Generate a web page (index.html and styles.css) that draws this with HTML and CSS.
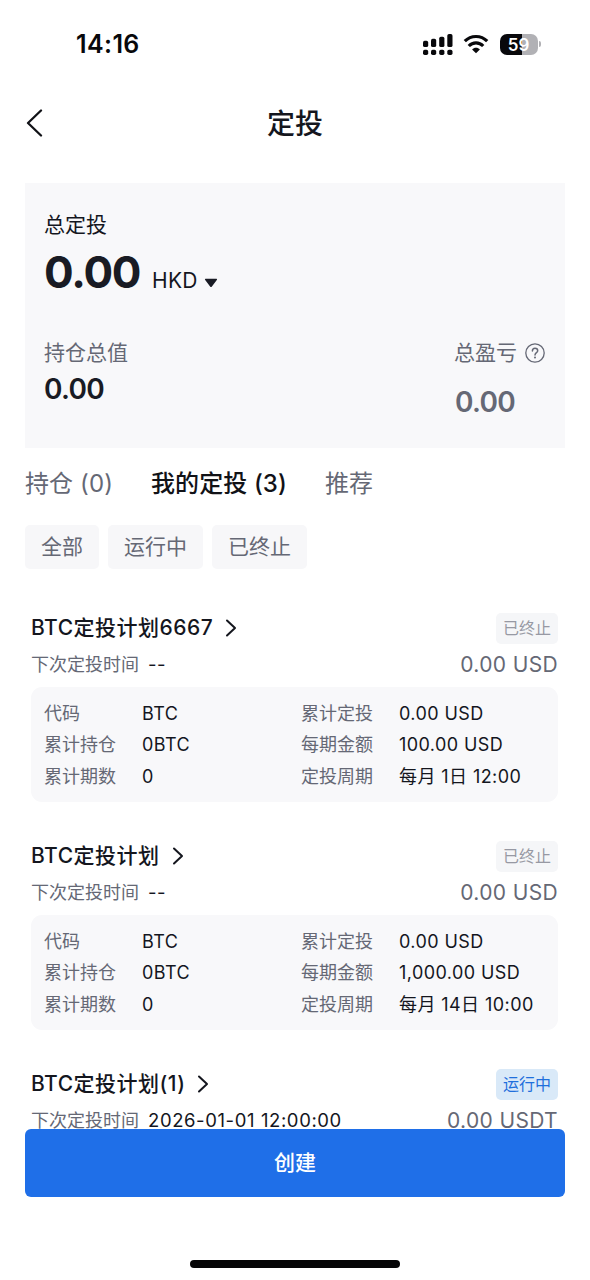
FILE: index.html
```html
<!DOCTYPE html>
<html lang="zh-CN">
<head>
<meta charset="utf-8">
<title>定投</title>
<link rel="stylesheet" href="styles.css">
</head>
<body>
<div class="screen">
  <div class="status-bar">
    <span class="clock">14:16</span>
    <div class="status-icons">
      <svg class="signal" width="30" height="21" viewBox="0 0 30 21" fill="#08080b">
        <rect x="0" y="6.7" width="5.2" height="6.4" rx="1.7"/>
        <rect x="8" y="4.8" width="5.2" height="8.3" rx="1.7"/>
        <rect x="16.2" y="2.8" width="5.2" height="10.3" rx="1.7"/>
        <rect x="24.3" y="0" width="5.2" height="13.1" rx="1.7"/>
        <rect x="0" y="15.7" width="5.2" height="5.2" rx="1.7"/>
        <rect x="8" y="15.7" width="5.2" height="5.2" rx="1.7"/>
        <rect x="16.2" y="15.7" width="5.2" height="5.2" rx="1.7"/>
        <rect x="24.3" y="15.7" width="5.2" height="5.2" rx="1.7"/>
      </svg>
      <svg class="wifi" width="26" height="20" viewBox="0 0 26 20" fill="none" stroke="#08080b" stroke-width="3.200">
        <path d="M1.800 7.200C8 .9 18 .9 24.200 7.200"/>
        <path d="M5.800 12c4.100-4.200 10.300-4.200 14.400 0"/>
        <path d="M13 19.200 9.100 15.400c2.100-2.100 5.700-2.100 7.800 0z" fill="#08080b" stroke="none"/>
      </svg>
      <div class="battery"><span class="battery-level">59</span><i class="battery-tip"></i></div>
    </div>
  </div>

  <div class="nav-bar">
    <svg class="back" width="18" height="28" viewBox="0 0 18 28" fill="none" stroke="#111217" stroke-width="2.300" stroke-linecap="round" stroke-linejoin="round"><path d="M16 1.500 3 14l13 12.500"/></svg>
    <h1 class="nav-title">定投</h1>
  </div>

  <div class="content">
    <section class="summary">
      <div class="summary-label">总定投</div>
      <div class="total">
        <span class="total-value">0.00</span>
        <span class="currency">HKD</span>
        <svg class="caret" width="14" height="10" viewBox="0 0 14 10" fill="#191b24"><path d="M1.700.8h10.600q1.400 0 .5 1.100L7.900 8.400q-.9 1-1.800 0L1.200 1.900Q.3.8 1.700.8z"/></svg>
      </div>
      <div class="summary-grid">
        <div>
          <div class="metric-label">持仓总值</div>
          <div class="metric-value">0.00</div>
        </div>
        <div class="profit">
          <div class="metric-label">总盈亏
            <svg width="20" height="20" viewBox="0 0 20 20" fill="none" stroke="#656875" stroke-width="1.300" stroke-linecap="round"><circle cx="10" cy="10" r="9.200"/><path d="M7.400 8c0-1.800 1.100-2.800 2.600-2.800s2.700 1 2.700 2.500c0 2-2.700 2-2.700 4.300" stroke-width="1.500"/><circle cx="10" cy="14.500" r=".4" fill="#656875"/></svg>
          </div>
          <div class="metric-value metric-muted">0.00</div>
        </div>
      </div>
    </section>

    <nav class="tabs">
      <span class="tab">持仓 (0)</span>
      <span class="tab tab-active">我的定投 (3)</span>
      <span class="tab">推荐</span>
    </nav>

    <div class="filters">
      <span class="chip">全部</span>
      <span class="chip">运行中</span>
      <span class="chip">已终止</span>
    </div>

    <div class="plans">
      <article class="plan">
        <div class="plan-head">
          <span class="plan-name">BTC定投计划6667</span>
          <svg class="chevron" width="12" height="20" viewBox="0 0 12 20"><path d="m2 2.500 8 7.500-8 7.500"/></svg>
          <span class="tag">已终止</span>
        </div>
        <div class="plan-next"><span class="next-label">下次定投时间</span><span class="next-time">--</span><span class="amount">0.00 USD</span></div>
        <div class="details">
          <span class="key">代码</span><span class="value">BTC</span><span class="key">累计定投</span><span class="value">0.00 USD</span>
          <span class="key">累计持仓</span><span class="value">0BTC</span><span class="key">每期金额</span><span class="value">100.00 USD</span>
          <span class="key">累计期数</span><span class="value">0</span><span class="key">定投周期</span><span class="value">每月 1日 12:00</span>
        </div>
      </article>
      <article class="plan">
        <div class="plan-head">
          <span class="plan-name">BTC定投计划</span>
          <svg class="chevron" width="12" height="20" viewBox="0 0 12 20"><path d="m2 2.500 8 7.500-8 7.500"/></svg>
          <span class="tag">已终止</span>
        </div>
        <div class="plan-next"><span class="next-label">下次定投时间</span><span class="next-time">--</span><span class="amount">0.00 USD</span></div>
        <div class="details">
          <span class="key">代码</span><span class="value">BTC</span><span class="key">累计定投</span><span class="value">0.00 USD</span>
          <span class="key">累计持仓</span><span class="value">0BTC</span><span class="key">每期金额</span><span class="value">1,000.00 USD</span>
          <span class="key">累计期数</span><span class="value">0</span><span class="key">定投周期</span><span class="value">每月 14日 10:00</span>
        </div>
      </article>
      <article class="plan">
        <div class="plan-head">
          <span class="plan-name">BTC定投计划(1)</span>
          <svg class="chevron" width="12" height="20" viewBox="0 0 12 20"><path d="m2 2.500 8 7.500-8 7.500"/></svg>
          <span class="tag tag-running">运行中</span>
        </div>
        <div class="plan-next"><span class="next-label">下次定投时间</span><span class="next-time">2026-01-01 12:00:00</span><span class="amount">0.00 USDT</span></div>
      </article>
    </div>
  </div>

  <footer class="footer">
    <button class="create">创建</button>
    <div class="home-indicator"></div>
  </footer>
</div>
</body>
</html>
```
FILE: styles.css
```css
* { box-sizing: border-box; }

body {
  margin: 0;
  background: #fff;
  color: #14161e;
  font-family: Inter, "Noto Sans CJK SC", sans-serif;
}

.screen {
  display: flex;
  flex-direction: column;
  width: 590px;
  height: 1280px;
  overflow: hidden;
}

.status-bar {
  display: flex;
  flex: none;
  justify-content: space-between;
  align-items: center;
  height: 88px;
  padding: 0 49px 0 76px;
}
.clock { font-size: 25px; font-weight: 600; line-height: 30px; letter-spacing: .4px; color: #08080b; }
.status-icons { display: flex; align-items: center; }
.wifi { margin: 0 11px 0 10px; }
.battery { display: flex; align-items: center; gap: 1.500px; }
.battery-level {
  width: 38px;
  height: 21px;
  border-radius: 7px;
  background: linear-gradient(90deg, #08080b 58%, #b1b1b5 58%);
  color: #fff;
  font-size: 17px;
  font-weight: 600;
  line-height: 22px;
  text-align: center;
}
.battery-tip { width: 2px; height: 6px; border-radius: 0 3px 3px 0; background: #b1b1b5; }

.nav-bar {
  display: grid;
  flex: none;
  grid-template-columns: 50px 1fr 50px;
  align-items: center;
  height: 70px;
  padding: 0 25px;
}
.nav-title { margin: 0; padding-top: 2px; font-size: 28px; font-weight: 500; line-height: 40px; text-align: center; }

.content { flex: 1; min-height: 0; overflow: hidden; padding: 25px 25px 0; }

.summary { height: 265px; padding: 26px 20px 0 19px; background: #f8f8fa; }
.summary-label { font-size: 21px; line-height: 32px; }
.total { display: flex; align-items: baseline; height: 52px; margin-top: 5px; line-height: 52px; }
.total-value { width: 108px; font-size: 44px; font-weight: 700; letter-spacing: -1.200px; color: #191b24; }
.currency { font-size: 21px; letter-spacing: .3px; }
.caret { margin-left: 6px; }
.summary-grid { display: flex; justify-content: space-between; margin-top: 39px; }
.metric-label { display: flex; align-items: center; gap: 8px; font-size: 21px; line-height: 32px; color: #656875; }
.metric-value { margin-top: 3px; font-size: 28px; font-weight: 600; line-height: 34px; letter-spacing: -.7px; color: #191b24; }
.metric-muted { margin-top: 16px; padding-left: 1px; color: #656875; }

.tabs { display: flex; gap: 38px; align-items: center; height: 67px; font-size: 24px; color: #656875; }
.tab { letter-spacing: .1px; }
.tab-active { color: #111217; font-weight: 500; }

.filters { display: flex; gap: 9px; margin-top: 10px; }
.chip {
  height: 44px;
  padding: 0 16px;
  border-radius: 5px;
  background: #f7f7f9;
  font-size: 21px;
  line-height: 43px;
  color: #656875;
}

.plans { padding: 43px 7px 0 6px; }
.plan { height: 228px; }
.plan-head { display: flex; align-items: center; height: 32px; }
.plan-name { font-size: 21px; font-weight: 500; line-height: 32px; letter-spacing: .5px; white-space: nowrap; }
.chevron { margin-left: 12px; fill: none; stroke: #14161e; stroke-width: 2; stroke-linecap: round; stroke-linejoin: round; }
.tag {
  height: 31px;
  margin-left: auto;
  padding: 0 7px;
  border-radius: 5px;
  background: #f5f6f8;
  font-size: 16px;
  line-height: 31px;
  color: #9799a3;
}
.tag-running { background: #d9e9f8; color: #1f6fdc; }
.plan-next { display: flex; align-items: center; height: 32px; margin-top: 4px; padding-top: 2px; font-size: 18px; line-height: 26px; }
.next-label { color: #656875; }
.next-time { margin-left: 9px; font-size: 18.500px; line-height: 24px; padding-bottom: 2px; letter-spacing: .6px; }
.amount { margin-left: auto; font-size: 21px; letter-spacing: .35px; color: #656875; }
.details {
  display: grid;
  grid-template-columns: 98px 159px 98px auto;
  grid-auto-rows: 31.500px;
  align-items: center;
  height: 115px;
  margin-top: 7px;
  padding: 11px 13px 9px;
  border-radius: 11px;
  background: #f8f8fa;
  font-size: 18px;
  line-height: 28px;
  white-space: nowrap;
}
.key { color: #656875; }
.value { letter-spacing: .42px; }

.footer {
  display: flex;
  flex: none;
  flex-direction: column;
  align-items: center;
  height: 151px;
  padding: 0 25px;
  background: #fff;
}
.create {
  width: 100%;
  height: 68px;
  padding: 0;
  border: 0;
  border-radius: 6px;
  background: #1f6fe8;
  color: #fff;
  font: 500 21px/68px Inter, "Noto Sans CJK SC", sans-serif;
}
.home-indicator { width: 210px; height: 8px; margin-top: 63px; border-radius: 4px; background: #060607; }
```
